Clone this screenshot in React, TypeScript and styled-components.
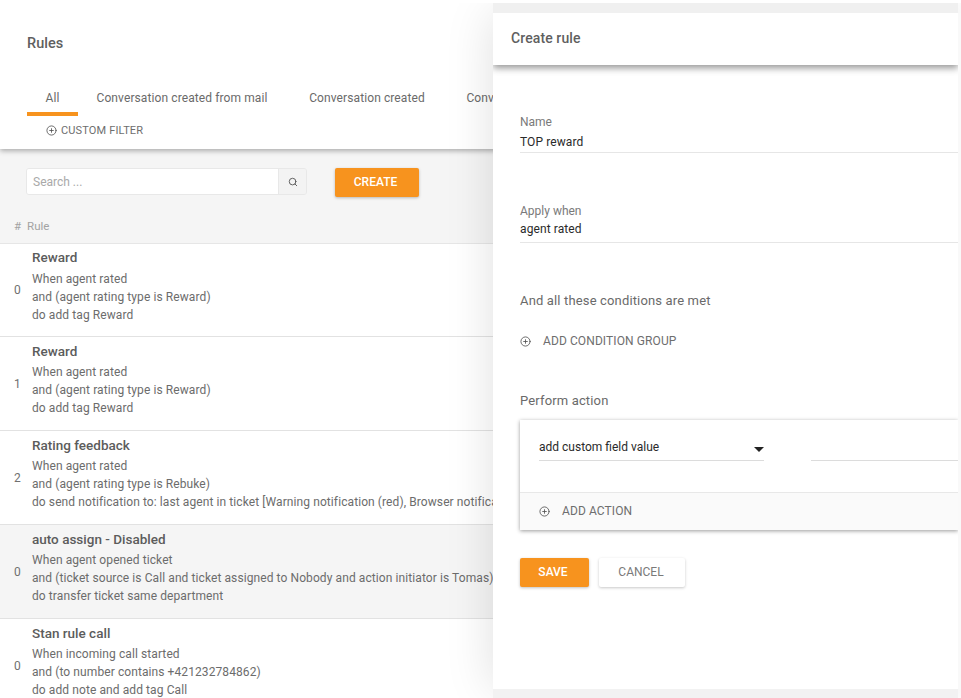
import React from "react";
import styled, { createGlobalStyle } from "styled-components";
import { CirclePlus, Search } from "lucide-react";

const Global = createGlobalStyle`
  html, body { margin: 0; padding: 0; background: #fff; }
  body { font-family: Roboto, "Liberation Sans", sans-serif; }
  * { box-sizing: border-box; }
`;

const Shell = styled.div`
  position: relative;
  width: 961px;
  height: 698px;
  overflow: hidden;
  background: #f5f5f5;
  &::after {
    content: "";
    position: absolute;
    left: 0;
    right: 0;
    top: 0;
    height: 3px;
    background: #fff;
    z-index: 5;
  }
`;

const PageHeader = styled.header`
  position: relative;
  z-index: 1;
  height: 149px;
  background: #fff;
  padding: 35px 0 0 27px;
  box-shadow: 0 2px 5px rgba(0, 0, 0, 0.3);
`;

const PageTitle = styled.h1`
  margin: 0;
  font-size: 14.5px;
  line-height: 17px;
  font-weight: 500;
  color: #5f5f5f;
`;

const Tabs = styled.nav`
  display: flex;
  margin-top: 37px;
  white-space: nowrap;
`;

const Tab = styled.div<{ $active?: boolean; $w: number }>`
  flex: none;
  width: ${(p) => p.$w}px;
  height: 27px;
  padding-top: 2px;
  font-size: 12px;
  line-height: 15px;
  letter-spacing: 0.1px;
  text-align: center;
  color: #6a6a6a;
  border-bottom: 4px solid ${(p) => (p.$active ? "#f7931e" : "transparent")};
`;

const CustomFilter = styled.div`
  display: flex;
  align-items: center;
  gap: 4px;
  margin: 7px 0 0 19px;
  font-size: 11px;
  line-height: 15px;
  letter-spacing: 0.15px;
  color: #6e6e6e;
`;

const PlusIcon = styled(CirclePlus)`
  flex: none;
  width: 11px;
  height: 11px;
  color: #505050;
  stroke-width: 1.8;
`;

const Toolbar = styled.div`
  display: flex;
  align-items: flex-start;
  gap: 28px;
  padding: 19px 0 0 26px;
  height: 61px;
`;

const SearchBox = styled.div`
  display: flex;
  width: 281px;
  height: 27px;
  border: 1px solid #e8e8e8;
  border-radius: 3px;
  overflow: hidden;
`;

const SearchField = styled.div`
  flex: 1;
  background: #fff;
  padding: 0 6px;
  font-size: 12px;
  line-height: 27px;
  color: #a9a9a9;
`;

const SearchAddon = styled.div`
  display: flex;
  align-items: center;
  justify-content: center;
  width: 28px;
  padding-top: 1px;
  background: #f3f3f3;
  border-left: 1px solid #e8e8e8;
  color: #555;
`;

const PrimaryButton = styled.button<{ $w: number }>`
  width: ${(p) => p.$w}px;
  height: 29px;
  border: 0;
  border-radius: 2px;
  padding: 0 3px 2px 0;
  background: #f7931e;
  color: #fff;
  font: 500 12px Roboto, sans-serif;
  box-shadow: 0 1px 3px rgba(0, 0, 0, 0.25);
`;

const TableHead = styled.div`
  display: flex;
  height: 33px;
  padding: 0 0 0 14px;
  gap: 6px;
  font-size: 11.5px;
  line-height: 32px;
  color: #a3a3a3;
`;

const RowTitle = styled.div`
  font-size: 13.5px;
  line-height: 17px;
  font-weight: 500;
  color: #5c5c5c;
  margin-bottom: 3px;
`;

const Row = styled.div<{ $muted?: boolean }>`
  display: flex;
  align-items: center;
  height: 94px;
  padding-left: 14px;
  background: ${(p) => (p.$muted ? "#f5f5f5" : "#fff")};
  border-bottom: 1px solid #e2e2e2;
  white-space: nowrap;
  overflow: hidden;
  &:first-child {
    box-shadow: inset 0 1px 0 #e6e6e6;
  }
  &:first-child ${RowTitle} {
    margin-bottom: 4px;
  }
`;

const RowIndex = styled.div`
  flex: none;
  width: 18px;
  margin-top: 1px;
  font-size: 12px;
  color: #707070;
`;

const RowBody = styled.div`
  align-self: flex-start;
  padding-top: 6px;
`;

const RowLine = styled.div`
  font-size: 12px;
  line-height: 18px;
  letter-spacing: 0.09px;
  color: #6c6c6c;
`;

const Panel = styled.aside`
  position: absolute;
  z-index: 2;
  left: 493px;
  top: 13px;
  width: 465px;
  height: 676px;
  overflow: hidden;
  background: #fff;
  box-shadow: 3px 0 0 #f9f9f9, 0 -10px 0 #f0f0f0, 0 9px 0 #f2f2f2,
    0 0 45px rgba(0, 0, 0, 0.13);
`;

const PanelHeader = styled.div`
  height: 52px;
  padding: 17px 0 0 18px;
  background: #fff;
  font-size: 14px;
  line-height: 17px;
  letter-spacing: 0.1px;
  font-weight: 500;
  color: #5f5f5f;
  box-shadow: 0 3px 7px rgba(0, 0, 0, 0.42);
`;

const PanelBody = styled.div`
  padding: 50px 0 0 27px;
`;

const Field = styled.div<{ $gap: number }>`
  margin-bottom: ${(p) => p.$gap}px;
  border-bottom: 1px solid #e6e6e6;
`;

const FieldLabel = styled.div`
  font-size: 12px;
  line-height: 15px;
  color: #7a7a7a;
`;

const FieldValue = styled.div<{ $h: number; $pad: number }>`
  height: ${(p) => p.$h}px;
  font-size: 12px;
  line-height: 17px;
  padding-top: ${(p) => p.$pad}px;
  color: #2a2a2a;
  letter-spacing: 0.1px;
`;

const SectionTitle = styled.div<{ $gap: number }>`
  font-size: 13px;
  line-height: 17px;
  letter-spacing: 0.15px;
  color: #6a6a6a;
  margin-bottom: ${(p) => p.$gap}px;
`;

const AddLink = styled.div<{ $gap: number; $pad?: number }>`
  display: flex;
  align-items: center;
  gap: ${(p) => p.$gap}px;
  padding-left: ${(p) => p.$pad ?? 0}px;
  font-size: 12px;
  line-height: 15px;
  letter-spacing: 0.1px;
  color: #6e6e6e;
`;

const ConditionGroup = styled.div`
  margin-bottom: 43px;
`;

const ActionCard = styled.div`
  height: 110px;
  background: #fff;
  box-shadow: 0 1px 4px rgba(0, 0, 0, 0.4);
`;

const ActionFields = styled.div`
  display: flex;
  gap: 47px;
  height: 72px;
  padding: 18px 0 0 19px;
`;

const SelectField = styled.div`
  position: relative;
  width: 225px;
  height: 23px;
  padding-top: 2px;
  border-bottom: 1px solid #dcdcdc;
  font-size: 12px;
  line-height: 15px;
  color: #2a2a2a;
`;

const Caret = styled.span`
  position: absolute;
  right: 0;
  top: 9px;
  border-left: 5px solid transparent;
  border-right: 5px solid transparent;
  border-top: 5px solid #222;
`;

const BlankField = styled.div`
  flex: 1;
  height: 23px;
  border-bottom: 1px solid #dcdcdc;
`;

const ActionFooter = styled.div`
  display: flex;
  align-items: center;
  height: 38px;
  background: #fafafa;
  border-top: 1px solid #e8e8e8;
`;

const Buttons = styled.div`
  display: flex;
  gap: 10px;
  margin-top: 28px;
`;

const SecondaryButton = styled.button`
  width: 86px;
  height: 29px;
  border: 0;
  border-radius: 2px;
  padding: 0 2px 2px 0;
  background: #fff;
  color: #7a7a7a;
  font: 400 12px Roboto, sans-serif;
  box-shadow: 0 1px 3px rgba(0, 0, 0, 0.22);
`;

const rules = [
  { i: 0, t: "Reward", l: ["When agent rated", "and (agent rating type is Reward)", "do add tag Reward"] },
  { i: 1, t: "Reward", l: ["When agent rated", "and (agent rating type is Reward)", "do add tag Reward"] },
  { i: 2, t: "Rating feedback", l: ["When agent rated", "and (agent rating type is Rebuke)", "do send notification to: last agent in ticket [Warning notification (red), Browser notification]"] },
  { i: 0, t: "auto assign - Disabled", muted: true, l: ["When agent opened ticket", "and (ticket source is Call and ticket assigned to Nobody and action initiator is Tomas)", "do transfer ticket same department"] },
  { i: 0, t: "Stan rule call", l: ["When incoming call started", "and (to number contains +421232784862)", "do add note and add tag Call"] },
];

export default function App() {
  return (
    <Shell>
      <Global />
      <PageHeader>
        <PageTitle>Rules</PageTitle>
        <Tabs>
          <Tab $active $w={51}>All</Tab>
          <Tab $w={208}>Conversation created from mail</Tab>
          <Tab $w={162}>Conversation created</Tab>
          <Tab $w={156}>Conversation updated</Tab>
        </Tabs>
        <CustomFilter>
          <PlusIcon />
          CUSTOM FILTER
        </CustomFilter>
      </PageHeader>
      <Toolbar>
        <SearchBox>
          <SearchField>Search ...</SearchField>
          <SearchAddon>
            <Search size={10} strokeWidth={2.2} />
          </SearchAddon>
        </SearchBox>
        <PrimaryButton $w={84}>CREATE</PrimaryButton>
      </Toolbar>
      <TableHead>
        <span>#</span>
        <span>Rule</span>
      </TableHead>
      <section>
        {rules.map((r, n) => (
          <Row key={n} $muted={r.muted}>
            <RowIndex>{r.i}</RowIndex>
            <RowBody>
              <RowTitle>{r.t}</RowTitle>
              {r.l.map((line) => (
                <RowLine key={line}>{line}</RowLine>
              ))}
            </RowBody>
          </Row>
        ))}
      </section>
      <Panel>
        <PanelHeader>Create rule</PanelHeader>
        <PanelBody>
          <Field $gap={51}>
            <FieldLabel>Name</FieldLabel>
            <FieldValue $h={22} $pad={4}>TOP reward</FieldValue>
          </Field>
          <Field $gap={49}>
            <FieldLabel>Apply when</FieldLabel>
            <FieldValue $h={23} $pad={2}>agent rated</FieldValue>
          </Field>
          <SectionTitle $gap={25}>And all these conditions are met</SectionTitle>
          <ConditionGroup>
            <AddLink $gap={12}>
              <PlusIcon />
              ADD CONDITION GROUP
            </AddLink>
          </ConditionGroup>
          <SectionTitle $gap={11}>Perform action</SectionTitle>
          <ActionCard>
            <ActionFields>
              <SelectField>
                add custom field value
                <Caret />
              </SelectField>
              <BlankField />
            </ActionFields>
            <ActionFooter>
              <AddLink $gap={12} $pad={19}>
                <PlusIcon />
                ADD ACTION
              </AddLink>
            </ActionFooter>
          </ActionCard>
          <Buttons>
            <PrimaryButton $w={69}>SAVE</PrimaryButton>
            <SecondaryButton>CANCEL</SecondaryButton>
          </Buttons>
        </PanelBody>
      </Panel>
    </Shell>
  );
}
